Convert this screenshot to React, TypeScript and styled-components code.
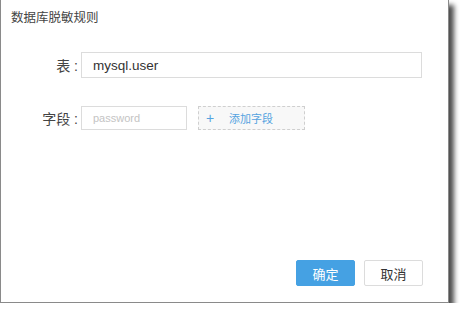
import React from "react";
import styled, { createGlobalStyle } from "styled-components";

const Global = createGlobalStyle`
  html, body { margin: 0; padding: 0; background: #ffffff; }
  body { font-family: "Liberation Sans", "Noto Sans CJK SC", sans-serif; }
  * { box-sizing: border-box; }
`;

const Dialog = styled.div`
  width: 449px;
  height: 303px;
  background: #ffffff;
  border: 1px solid #8a8a8a;
  border-top: none;
  box-shadow: 5px 5px 5px rgba(0, 0, 0, 0.7);
  display: flex;
  flex-direction: column;
`;

const Title = styled.div`
  padding: 7px 0 0 10px;
  line-height: 20px;
  font-size: 12.5px;
  color: #444;
  font-family: "Noto Sans CJK SC", sans-serif;
`;

const Form = styled.div`
  display: flex;
  flex-direction: column;
  gap: 28px;
  margin-top: 25px;
`;

const Row = styled.div`
  display: flex;
  align-items: center;
`;

const Label = styled.label`
  width: 77px;
  text-align: right;
  font-size: 14px;
  color: #444;
  font-family: "Liberation Sans", "Noto Sans CJK SC", sans-serif;
  white-space: pre;
`;

const TextInput = styled.input<{ $w: number; $h: number; $fs: number }>`
  margin-left: 3px;
  width: ${(p) => p.$w}px;
  height: ${(p) => p.$h}px;
  border: 1px solid #dcdcdc;
  padding: 0 11px;
  font-size: ${(p) => p.$fs}px;
  font-family: "Liberation Sans", "Noto Sans CJK SC", sans-serif;
  color: #333;
  outline: none;
  background: #fff;
  &::placeholder { color: #c4c4c4; }
`;

const AddButton = styled.button`
  margin-left: 11px;
  width: 107px;
  height: 24px;
  border: 1px dashed #cfcfcf;
  background: #f8f8f8;
  display: flex;
  align-items: center;
  padding: 0 0 0 7px;
  color: #55a3e0;
  font-family: "Noto Sans CJK SC", sans-serif;
  font-size: 11px;
  cursor: pointer;
`;

const Plus = styled.span`
  font-family: "Liberation Sans", sans-serif;
  font-size: 14px;
  font-weight: 300;
  width: 23px;
  text-align: left;
`;

const Footer = styled.div`
  margin-top: auto;
  display: flex;
  justify-content: flex-end;
  gap: 9px;
  padding: 0 25px 16px 0;
`;

const Btn = styled.button<{ $primary?: boolean }>`
  width: 59px;
  height: 26px;
  font-size: 13px;
  font-family: "Noto Sans CJK SC", sans-serif;
  border: 1px solid ${(p) => (p.$primary ? "#45a1e3" : "#dcdcdc")};
  background: ${(p) => (p.$primary ? "#45a1e3" : "#ffffff")};
  color: ${(p) => (p.$primary ? "#ffffff" : "#333")};
  border-radius: 2px;
  padding: 0;
  cursor: pointer;
`;

export default function App() {
  return (
    <>
      <Global />
      <Dialog>
        <Title>数据库脱敏规则</Title>
        <Form>
          <Row>
            <Label>表 :</Label>
            <TextInput $w={341} $h={26} $fs={13.5} defaultValue="mysql.user" />
          </Row>
          <Row>
            <Label>字段 :</Label>
            <TextInput $w={106} $h={24} $fs={11} placeholder="password" />
            <AddButton>
              <Plus>+</Plus>
              添加字段
            </AddButton>
          </Row>
        </Form>
        <Footer>
          <Btn $primary>确定</Btn>
          <Btn>取消</Btn>
        </Footer>
      </Dialog>
    </>
  );
}
